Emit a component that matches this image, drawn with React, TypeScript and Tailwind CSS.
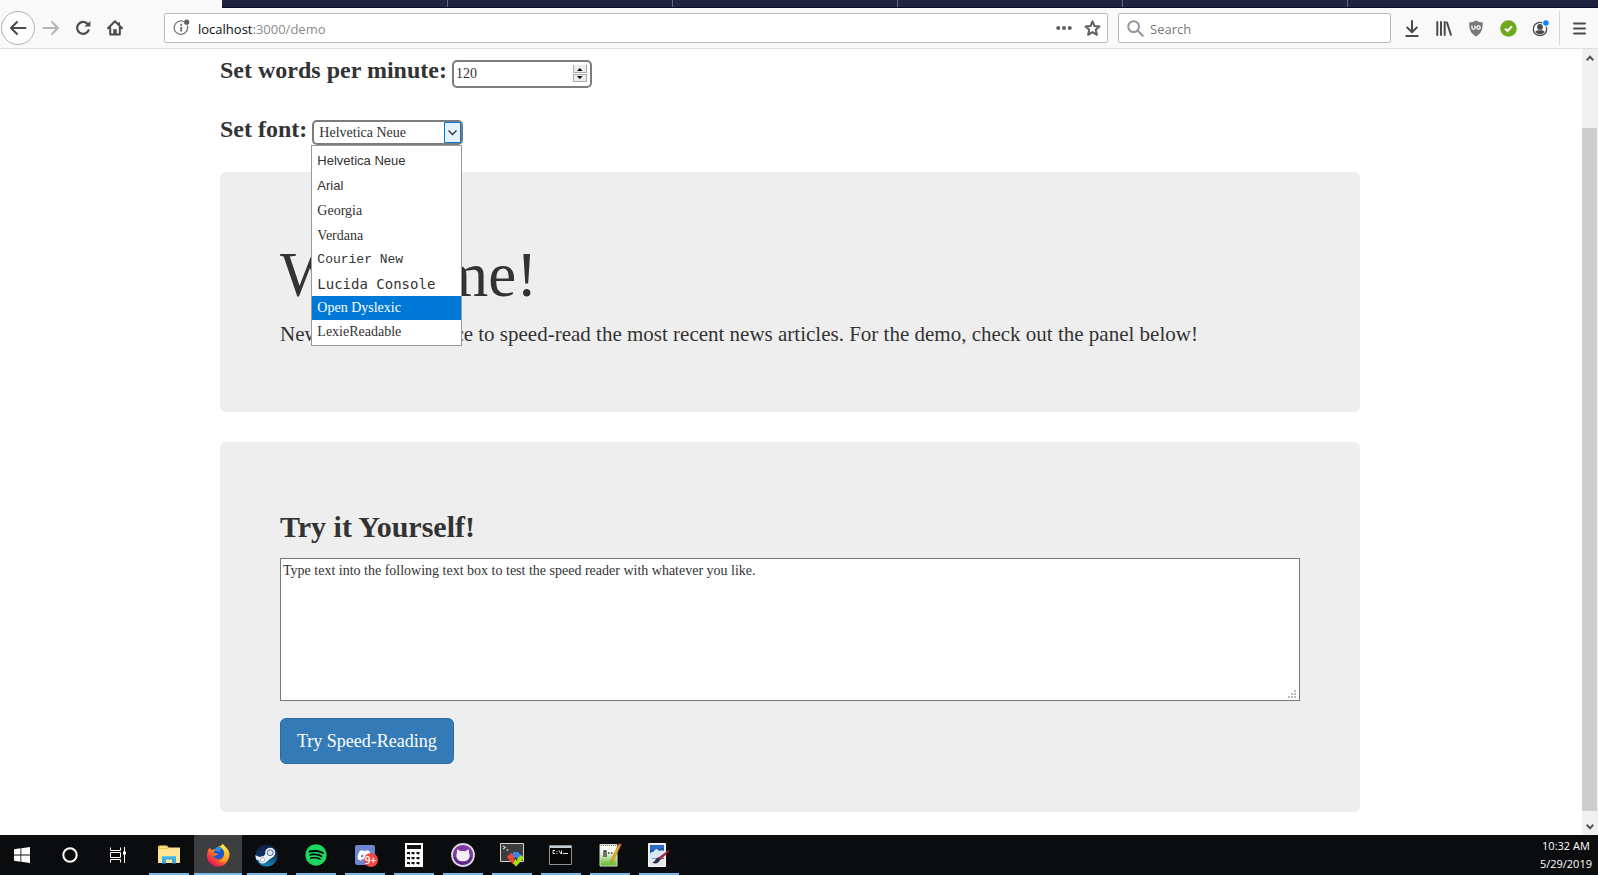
import React from "react";
import { FaDiscord, FaSpotify } from "react-icons/fa";

const fonts = [
  { name: "Helvetica Neue", style: "h-[25px] font-['Liberation_Sans'] text-[13px]" },
  { name: "Arial", style: "h-[25px] font-['Liberation_Sans'] text-[13px]" },
  { name: "Georgia", style: "h-[25px] text-sm" },
  { name: "Verdana", style: "h-[25px] text-sm" },
  { name: "Courier New", style: "h-6 font-['Liberation_Mono'] text-[13px]" },
  { name: "Lucida Console", style: "h-6 font-['DejaVu_Sans_Mono'] text-sm" },
  { name: "Open Dyslexic", style: "h-6 bg-[#0078d7] text-white text-sm" },
  { name: "LexieReadable", style: "h-6 text-sm" },
];

function TabStrip() {
  return (
    <div className="flex h-2 bg-[#f9f9fa]">
      <div className="w-[222px] shrink-0" />
      <div className="flex grow border-b border-[#0c0c2b] bg-[#202340] pl-px">
        {[0, 1, 2, 3, 4].map((n) => (
          <div key={n} className="w-[225px] shrink-0 border-r border-[#63657a]" />
        ))}
      </div>
    </div>
  );
}

function ToolButton({ label, children }: { label: string; children: React.ReactNode }) {
  return (
    <button type="button" aria-label={label} className="flex h-8 w-8 shrink-0 items-center justify-center">
      {children}
    </button>
  );
}

function Toolbar() {
  return (
    <header className="flex h-[41px] items-center border-b border-[#e0e0e1] bg-[#f9f9fa] text-[#4a4a4f]">
      <button
        type="button"
        aria-label="Back"
        className="ml-px flex h-[34px] w-[34px] shrink-0 items-center justify-center rounded-full border border-[#b1b1b3] bg-[#fdfdfd]"
      >
        <svg width="18" height="16" viewBox="0 0 18 16" fill="none" stroke="currentColor" strokeWidth="2" strokeLinecap="round" strokeLinejoin="round">
          <path d="M16.5 8H2M8 2 2 8l6 6" />
        </svg>
      </button>
      <ToolButton label="Forward">
        <svg width="18" height="16" viewBox="0 0 18 16" fill="none" stroke="#b5b5b7" strokeWidth="2" strokeLinecap="round" strokeLinejoin="round">
          <path d="M1.5 8H16M10 2l6 6-6 6" />
        </svg>
      </ToolButton>
      <ToolButton label="Reload">
        <svg width="16" height="16" viewBox="0 0 16 16" fill="none">
          <path d="M13.6 10.3A6 6 0 1 1 12.7 4" stroke="currentColor" strokeWidth="2.2" strokeLinecap="round" />
          <path d="M15.4 1v5.6h-6z" fill="currentColor" />
        </svg>
      </ToolButton>
      <ToolButton label="Home">
        <svg width="16" height="16" viewBox="0 0 16 16" fill="none">
          <path d="M1 8.2 8 1.3l7 6.9M3.2 7.5v7h9.6v-7" stroke="currentColor" strokeWidth="2" strokeLinecap="round" strokeLinejoin="round" />
          <path d="M6.3 14V9.2h3.4V14z" fill="currentColor" />
          <path d="M12.3 2.2v3" stroke="currentColor" strokeWidth="1.4" />
        </svg>
      </ToolButton>
      <div className="ml-[33px] flex h-[30px] grow items-center rounded-xs border border-[#b9b9bb] bg-white pl-2">
        <svg className="shrink-0" width="18" height="18" viewBox="0 0 18 18" fill="none">
          <path d="M10.7 2.6A6.7 6.7 0 1 0 14.2 6.5" stroke="#737373" strokeWidth="1.3" />
          <path d="M8.2 8v4.6M8.2 4.8v1.9" stroke="#737373" strokeWidth="2" />
          <circle cx="13.7" cy="3.2" r="2.6" fill="#606060" />
        </svg>
        <button type="button" className="ml-[7px] grow pt-0.5 text-left text-[13px] leading-5 text-[#8a8a8d]">
          <span className="text-[#0c0c0d]">localhost</span>:3000/demo
        </button>
        <button type="button" aria-label="Page actions" className="mr-3 shrink-0">
          <svg width="16" height="16" viewBox="0 0 16 16" fill="#5f5f63">
            <circle cx="2.2" cy="8" r="2" />
            <circle cx="8" cy="8" r="2" />
            <circle cx="13.8" cy="8" r="2" />
          </svg>
        </button>
        <button type="button" aria-label="Bookmark this page" className="mr-1.5 shrink-0">
          <svg width="17" height="17" viewBox="0 0 17 17" fill="none" stroke="#5f5f63" strokeWidth="2" strokeLinejoin="round">
            <path d="m8.5 1.4 2 4.6 5 .5-3.8 3.3 1.2 5-4.4-2.7-4.4 2.7 1.2-5L1.5 6.5l5-.5z" />
          </svg>
        </button>
      </div>
      <div className="ml-2.5 flex h-[30px] w-[273px] shrink-0 items-center rounded-xs border border-[#b9b9bb] bg-white px-2">
        <svg className="shrink-0" width="17" height="17" viewBox="0 0 17 17" fill="none" stroke="#969698" strokeWidth="2" strokeLinecap="round">
          <circle cx="6.6" cy="6.6" r="5.4" />
          <path d="m10.8 10.8 5 5" />
        </svg>
        <input aria-label="Search" placeholder="Search" className="ml-1.5 w-full pt-0.5 text-[13px] leading-5 outline-none placeholder:text-[#77777a]" />
      </div>
      <div className="ml-[5px] flex items-center">
        <ToolButton label="Downloads">
          <svg width="14" height="17" viewBox="0 0 14 17" fill="none" stroke="currentColor" strokeWidth="2" strokeLinecap="round" strokeLinejoin="round">
            <path d="M7 1v11M2.2 7.5 7 12.2l4.8-4.7M1.3 16h11.4" />
          </svg>
        </ToolButton>
        <ToolButton label="Library">
          <svg width="16" height="15" viewBox="0 0 16 15" fill="none" stroke="currentColor" strokeWidth="2" strokeLinecap="round">
            <path d="M1.3 1v13M5 1v13M8.7 1v13M11 1.5l3.9 12.3" />
          </svg>
        </ToolButton>
        <ToolButton label="uBlock Origin">
          <svg width="16" height="17" viewBox="0 0 16 17" fill="none">
            <path d="M8 .5c2 1.3 4.3 1.8 6.8 1.8.1 7-1.2 11-6.8 14.2C2.4 13.3 1.1 9.3 1.2 2.3 3.7 2.3 6 1.8 8 .5Z" fill="#7a7a7c" />
            <path d="M4 5.5v2.6q0 1.2 1.5 1.2T7 8.1V5.500" stroke="#fff" strokeWidth="1.2" />
            <circle cx="10.5" cy="7.5" r="1.7" stroke="#fff" strokeWidth="1.2" />
          </svg>
        </ToolButton>
        <ToolButton label="Site is safe">
          <svg width="17" height="17" viewBox="0 0 17 17" fill="none">
            <circle cx="8.5" cy="8.5" r="8.3" fill="#6fa818" />
            <path d="m5 8.6 2.5 2.4L12 6.3" stroke="#fff" strokeWidth="2" />
          </svg>
        </ToolButton>
        <ToolButton label="Account">
          <svg width="17" height="17" viewBox="0 0 17 17" fill="none">
            <circle cx="8" cy="9" r="6.7" stroke="#4a4a4f" strokeWidth="1.3" />
            <circle cx="8" cy="6.9" r="2.9" fill="#4a4a4f" />
            <path d="M3.5 12c1-2 2.5-1.8 4.5-1.8s3.5-.2 4.5 1.8c-1.2 1.6-2.7 2.3-4.5 2.3S4.7 13.6 3.5 12Z" fill="#4a4a4f" />
            <circle cx="13.7" cy="3.2" r="3.7" fill="#f9f9fa" />
            <circle cx="13.9" cy="3" r="2.8" fill="#0a84ff" />
          </svg>
        </ToolButton>
      </div>
      <div className="ml-[3px] h-[34px] w-px shrink-0 bg-[#d7d7db]" />
      <button type="button" aria-label="Open menu" className="flex h-8 w-[38px] shrink-0 items-center justify-center">
        <svg width="13" height="13" viewBox="0 0 13 13" fill="none" stroke="currentColor" strokeWidth="2" strokeLinecap="round">
          <path d="M1 1.5h11M1 6.5h11M1 11.5h11" />
        </svg>
      </button>
    </header>
  );
}

function Settings() {
  return (
    <form className="pt-[7px]">
      <div className="flex items-start gap-[5px]">
        <label htmlFor="wpm" className="text-2xl leading-7 font-bold">
          Set words per minute:
        </label>
        <div className="relative mt-1">
          <input
            id="wpm"
            type="number"
            defaultValue={120}
            className="block h-7 w-[140px] [appearance:textfield] rounded-[5px] border-2 border-[#7d7d7d] bg-white pb-px pl-0.5 text-sm [&::-webkit-inner-spin-button]:appearance-none"
          />
          <svg className="pointer-events-none absolute top-[5px] right-[5px]" width="14" height="17" viewBox="0 0 14 17">
            <path d="M0 0h14v8H0zM0 9h14v8H0z" fill="#a9a9a9" />
            <path d="M1 0h12v7H1zM1 10h12v6H1z" fill="#ececec" />
            <path d="M4 6h5.5L6.8 3zM4 11h5.5l-2.7 3z" fill="#000" />
          </svg>
        </div>
      </div>
      <div className="mt-[27px] flex items-start gap-[5px]">
        <label htmlFor="font" className="text-2xl leading-7 font-bold">
          Set font:
        </label>
        <div className="relative mt-[5px]">
          <select id="font" className="block h-[25px] w-[151px] appearance-none rounded-[5px] border-2 border-[#7d7d7d] bg-white pt-px pl-[5px] text-sm leading-5">
            {fonts.map((font) => (
              <option key={font.name}>{font.name}</option>
            ))}
          </select>
          <svg className="pointer-events-none absolute top-0.5 right-0.5" width="17" height="21" viewBox="0 0 17 21" fill="none">
            <path d="M.5.5h16v20H.5z" fill="#e5f1fb" stroke="#0078d7" />
            <path d="m4.5 8.5 4 4 4-4" stroke="#333" strokeWidth="1.3" />
          </svg>
          <ul role="listbox" aria-label="Fonts" className="absolute top-full -left-px z-10 w-[151px] border border-[#999] bg-white pt-0.5 pb-px">
            {fonts.map((font) => (
              <li key={font.name} role="option" aria-selected={font.name === "Open Dyslexic"} className={"flex items-center pl-[5px] " + font.style}>
                {font.name}
              </li>
            ))}
          </ul>
        </div>
      </div>
    </form>
  );
}

function Page() {
  return (
    <main className="grow bg-white pr-0.5 font-['Liberation_Serif',serif] text-[#333]">
      <div className="mx-auto max-w-[1140px] pb-[23px]">
        <Settings />
        <section className="mt-[27px] rounded-md bg-[#eee] px-[60px] pt-[69px] pb-[63px]">
          <h1 className="text-[63px] leading-[69px]">Welcome!</h1>
          <p className="mt-[9px] text-[21px] leading-[30px]">
            NewsFlash is the place to speed-read the most recent news articles. For the demo, check out the panel below!
          </p>
        </section>
        <section className="mt-[30px] rounded-md bg-[#eee] px-[60px] pt-[68px] pb-12">
          <h2 className="text-3xl leading-[33px] font-bold">
            <label htmlFor="sample">Try it Yourself!</label>
          </h2>
          <div className="relative mt-[15px]">
            <textarea
              id="sample"
              defaultValue="Type text into the following text box to test the speed reader with whatever you like."
              className="block h-[143px] w-full resize-none border border-[#777] bg-white px-0.5 py-0.5 text-sm leading-5"
            />
            <svg className="pointer-events-none absolute right-1 bottom-[3px]" width="8" height="8" viewBox="0 0 8 8" fill="#bbb">
              <path d="M6 0h2v2H6zM3 3h2v2H3zM6 3h2v2H6zM0 6h2v2H0zM3 6h2v2H3zM6 6h2v2H6z" />
            </svg>
          </div>
          <button type="button" className="mt-[17px] h-[46px] rounded-md border border-[#2e6da4] bg-[#337ab7] px-4 text-lg text-white">
            Try Speed-Reading
          </button>
        </section>
      </div>
    </main>
  );
}

function ScrollBar() {
  return (
    <div className="flex w-4 shrink-0 flex-col items-center bg-[#f0f0f0]">
      <svg className="mt-1.5 mb-[67px] shrink-0" width="8" height="6" viewBox="0 0 8 6" fill="none" stroke="#555" strokeWidth="2">
        <path d="m.7 5.2 3.3-3.4 3.3 3.4" />
      </svg>
      <div className="mr-px w-[15px] grow bg-[#cdcdcd]" />
      <svg className="mt-[13px] mb-[5px] shrink-0" width="8" height="6" viewBox="0 0 8 6" fill="none" stroke="#555" strokeWidth="2">
        <path d="m.7.8 3.3 3.4L7.3.8" />
      </svg>
    </div>
  );
}

function FolderIcon() {
  return (
    <svg width="22" height="20" viewBox="0 0 22 20">
      <path d="M0 2.5h1V.5h8l1.500 2H22V18H0z" fill="#ffe494" />
      <path d="M0 1h9.500v3H0z" fill="#f5c63d" />
      <path d="M2 1.800h6v1H2z" fill="#fff3c4" />
      <path d="M4 11h14v7.500h-4V14.500H8v4H4z" fill="#39ace2" />
      <path d="M4 11h14v1.500H4z" fill="#61c5ee" />
    </svg>
  );
}

function FirefoxIcon() {
  return (
    <svg width="24" height="24" viewBox="0 0 24 24">
      <defs>
        <linearGradient id="fox" x1=".85" y1=".05" x2=".2" y2=".9">
          <stop offset="0" stopColor="#fff13f" />
          <stop offset=".35" stopColor="#ffb41f" />
          <stop offset=".65" stopColor="#ff5a2d" />
          <stop offset="1" stopColor="#e9155f" />
        </linearGradient>
        <linearGradient id="foxTail" x1=".5" y1="0" x2=".6" y2="1">
          <stop offset="0" stopColor="#fff14f" />
          <stop offset="1" stopColor="#ff9514" />
        </linearGradient>
      </defs>
      <path d="M3.500 4.500 5.300 7 8 6.500 12 4l5-2.500c5.500 5 6.500 8.500 6 12C22 20 17.500 23.500 12 23.500S1 19 1 13c0-3.500 1-6 2.500-8.500Z" fill="url(#fox)" />
      <path d="M9 5.500c3-2.500 6.500-1.500 8.500 2 1.500 3 .5 7-3 8.500-3 1-6.500-.5-7.500-3.500l2 .5 3-1.500-1-1-3-.5-.5-1.500 2-1z" fill="#1b58c9" />
      <path d="M9.500 5.500c2-2 5-2 6.500 0l-3 3-3-.8z" fill="#2493e8" />
      <path d="M16.500.5c-1 3 .5 4.500 1.500 6.500 2.500 5-1 10.500-5.500 11.500 6 2 10.500-2 11-6 .5-4.500-2.500-7-4.500-9-1-1-2-2-2.500-3Z" fill="url(#foxTail)" />
    </svg>
  );
}

function SteamIcon() {
  return (
    <svg width="23" height="23" viewBox="0 0 23 23">
      <defs>
        <linearGradient id="steam" x1="0" y1="0" x2="0" y2="1">
          <stop offset="0" stopColor="#111d42" />
          <stop offset=".5" stopColor="#113363" />
          <stop offset="1" stopColor="#158cc4" />
        </linearGradient>
        <clipPath id="steamDisc">
          <circle cx="11.5" cy="11.5" r="11" />
        </clipPath>
      </defs>
      <circle cx="11.5" cy="11.5" r="11" fill="url(#steam)" />
      <g clipPath="url(#steamDisc)">
        <path d="m0 11 7 3 6-7 6 5-9 7-10-4z" fill="#e4ecf3" />
      </g>
      <circle cx="7.5" cy="15.8" r="3.6" fill="#fff" />
      <circle cx="7.5" cy="15.8" r="2.2" fill="none" stroke="#7b98b5" strokeWidth=".8" />
      <circle cx="15.2" cy="8.7" r="5" fill="#f3f7fa" />
      <circle cx="15.2" cy="8.7" r="3" fill="#dbe5ee" stroke="#3b5a80" strokeWidth=".9" />
    </svg>
  );
}

function SpotifyIcon() {
  return (
    <span className="flex rounded-full bg-black">
      <FaSpotify size={22} color="#1ed760" />
    </span>
  );
}

function DiscordIcon() {
  return (
    <span className="relative flex h-5 w-5 items-center justify-center rounded-xs bg-[#6f86cf] text-white">
      <FaDiscord size={15} />
      <span className="absolute top-2 left-[9px] flex h-3.5 w-3.5 items-center justify-center rounded-full bg-[#f04848] text-[10px] leading-none font-semibold">9+</span>
    </span>
  );
}

function CalculatorIcon() {
  return (
    <svg width="18" height="24" viewBox="0 0 18 24">
      <path d="M0 0h18v24H0z" fill="#fff" />
      <path d="M2 2h14v4H2zM2 9h3v2l-1 1v-1H2zM6.500 9h3v2l-1 1v-1h-2zM11.500 9h3v2l-1 1v-1h-2zM2 14h3v2l-1 1v-1H2zM6.500 14h3v2l-1 1v-1h-2zM11.500 14h3v2l-1 1v-1h-2zM2 19h3v2l-1 1v-1H2zM6.500 19h3v2l-1 1v-1h-2zM11.500 19h3v2l-1 1v-1h-2z" fill="#111" />
    </svg>
  );
}

function GithubIcon() {
  return (
    <svg width="24" height="24" viewBox="0 0 24 24">
      <circle cx="12" cy="12" r="11" fill="#7d3aa3" stroke="#dcd7e0" strokeWidth="1.8" />
      <path d="M2.500 14a9.700 9.700 0 0 0 19 0z" fill="#5f2784" />
      <path d="M6.500 6.300 9.500 8.300q2.500-.6 5 0l3-2q.9 1.700.5 3.600 1 1.600.6 3.600c-.5 3.500-3 4.800-6.600 4.800s-6.100-1.300-6.600-4.800q-.4-2 .6-3.600-.4-1.900.5-3.600Z" fill="#f3f0f5" />
    </svg>
  );
}

function CmderIcon() {
  return (
    <svg width="24" height="24" viewBox="0 0 24 24">
      <path d="M.5.5h23v18H.5z" fill="#3b3d3f" stroke="#d5d5d5" />
      <path d="m3 3 2.500 1.500L3 6M6.500 7h2" fill="none" stroke="#fff" />
      <path d="m7 14 4-4 2 1 2 3-1 2-2-1-2 3z" fill="#f1483c" />
      <path d="m13 9 5 0 3 3-3 4-2-2-2 1-1-3z" fill="#3d86ec" />
      <path d="m18 15 3-3 3 3-8 8.500-3.500-3.500 3-4 1 2z" fill="#a3e412" />
      <path d="m10 18 2-3 3 2-2 4z" fill="#f1483c" />
    </svg>
  );
}

function TerminalIcon() {
  return (
    <svg width="23" height="20" viewBox="0 0 23 20">
      <path d="M.5.5h22v19H.5z" fill="#050505" stroke="#8b9299" />
      <path d="M1 1h21v2H1z" fill="#c4ccd5" />
      <path d="M6 5.500H4v3h2M8 6v1M8 8v1M10 5.500l2 3.500M12.500 5.500V9M14 8.500h5" fill="none" stroke="#e8e8e8" />
    </svg>
  );
}

function NotepadIcon() {
  return (
    <svg width="24" height="24" viewBox="0 0 24 24">
      <defs>
        <linearGradient id="note" x1="0" y1="0" x2="0" y2="1">
          <stop offset=".35" stopColor="#f7fbf0" />
          <stop offset="1" stopColor="#59b91c" />
        </linearGradient>
      </defs>
      <path d="M2 1.500h17V23H2z" fill="url(#note)" stroke="#d9d9d9" />
      <path d="M3 2.500h15" stroke="#777" strokeDasharray="1 1" />
      <path d="M6 14V8h2v6M10 10h1.500M13 10h1.500" fill="none" stroke="#333" strokeWidth="1.3" />
      <path d="m21 1 2 1-8 16-2.500 2 .5-3z" fill="#efb51f" stroke="#9c6b10" strokeWidth=".6" />
      <path d="m20.500 2 2.500 1 .5-2-1.800-.8z" fill="#d04f38" />
    </svg>
  );
}

function PaintIcon() {
  return (
    <svg width="23" height="24" viewBox="0 0 23 24">
      <path d="M1.500.5h17v23h-17z" fill="#e6e8eb" stroke="#f7f7f8" />
      <path d="M3 2h14v14H3z" fill="#1d55ad" />
      <path d="M3 11c1-3 3-1 4-3s3-3 4-1 4-1 6 1v7c-4 1-9 0-14 1z" fill="#d6e5f7" />
      <path d="M3 2h14v3L3 7z" fill="#2c6cc9" />
      <path d="m22 7-10 7.500-1.500 3L13 17l9.500-9z" fill="#c02638" stroke="#7c1827" strokeWidth=".6" />
      <path d="M12 14.500c-4 0-3 4.500-7 5 3 2 7 1 8-3z" fill="#29304a" />
    </svg>
  );
}

const apps = [
  { name: "File Explorer", Icon: FolderIcon },
  { name: "Firefox", Icon: FirefoxIcon, active: true },
  { name: "Steam", Icon: SteamIcon },
  { name: "Spotify", Icon: SpotifyIcon },
  { name: "Discord", Icon: DiscordIcon },
  { name: "Calculator", Icon: CalculatorIcon },
  { name: "GitHub Desktop", Icon: GithubIcon },
  { name: "Cmder", Icon: CmderIcon },
  { name: "Command Prompt", Icon: TerminalIcon },
  { name: "Notepad++", Icon: NotepadIcon },
  { name: "Paint", Icon: PaintIcon },
];

function Taskbar() {
  return (
    <footer className="flex h-10 items-stretch bg-[#0b0c0e] text-white">
      <button type="button" aria-label="Start" className="flex w-11 items-center justify-center">
        <svg width="16" height="16" viewBox="0 0 16 16" fill="#fff">
          <path d="M0 2.200 6.500 1.300v6.200H0zM7.300 1.200 16 0v7.500H7.300zM0 8.400h6.500v6.300L0 13.800zM7.300 8.400H16V16l-8.700-1.200z" />
        </svg>
      </button>
      <button type="button" aria-label="Cortana" className="flex w-[51px] items-center justify-center">
        <svg width="16" height="16" viewBox="0 0 16 16" fill="none">
          <circle cx="8" cy="8" r="6.700" stroke="#fff" strokeWidth="2" />
        </svg>
      </button>
      <button type="button" aria-label="Task view" className="flex w-[46px] items-center justify-center">
        <svg width="16" height="16" viewBox="0 0 16 16" fill="none" stroke="#fff">
          <path d="M.5.5v3h10v-3M.5 15.500v-3h10v3M.5 5.500h10v5H.5zM14.500 0v16" />
          <path d="M13 4.500h3v3h-3z" fill="#fff" stroke="none" />
        </svg>
      </button>
      <nav aria-label="Running apps" className="ml-[3px] flex grow">
        {apps.map(({ name, Icon, active }) => (
          <div key={name} className="flex w-[49px] justify-center">
            <button
              type="button"
              aria-label={name}
              className={
                active
                  ? "flex w-12 items-center justify-center border-b-2 border-[#76b9ed] bg-[#3d3e40] pt-0.5"
                  : "flex w-10 items-center justify-center border-b-2 border-[#76b9ed] pt-0.5"
              }
            >
              <Icon />
            </button>
          </div>
        ))}
      </nav>
      <div className="flex flex-col justify-center pr-1.5 text-center text-[11px] leading-[18px]">
        <time>10:32 AM</time>
        <time>5/29/2019</time>
      </div>
    </footer>
  );
}

export default function App() {
  return (
    <div className="flex min-h-screen flex-col bg-white font-['Open_Sans','Noto_Sans',sans-serif]">
      <TabStrip />
      <Toolbar />
      <div className="flex grow">
        <Page />
        <ScrollBar />
      </div>
      <Taskbar />
    </div>
  );
}
